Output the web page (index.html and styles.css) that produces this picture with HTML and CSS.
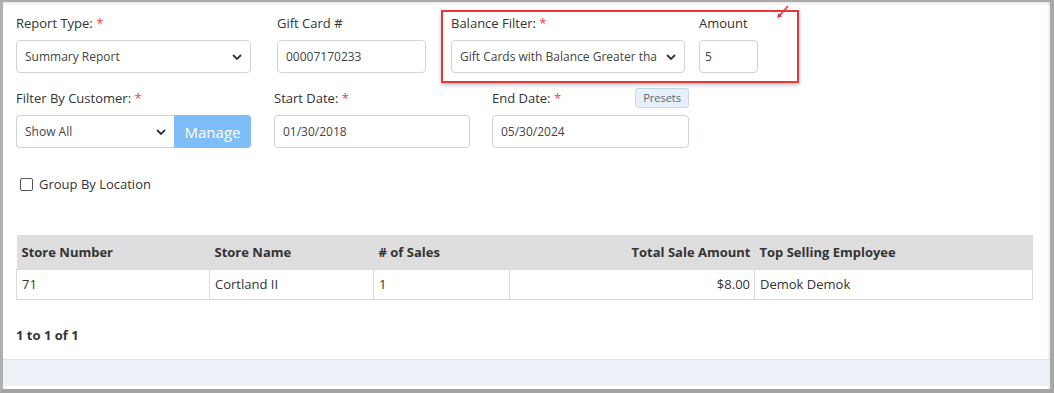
FILE: index.html
```html
<!DOCTYPE html>
<html>
<head>
<meta charset="utf-8">
<link rel="stylesheet" href="styles.css">
</head>
<body>
<div class="frame">
  <div class="content">
    <div class="row row1">
      <div class="field w-report">
        <div class="label">Report Type: <span class="req">*</span></div>
        <div class="select">
          <span>Summary Report</span>
          <svg class="chev" width="10" height="6" viewBox="0 0 10 6"><path d="M1 1l4 4 4-4" fill="none" stroke="#333" stroke-width="1.8"/></svg>
        </div>
      </div>
      <div class="field w-gift">
        <div class="label">Gift Card #</div>
        <div class="input">00007170233</div>
      </div>
      <div class="highlight">
        <div class="field w-balance">
          <div class="label">Balance Filter: <span class="req">*</span></div>
          <div class="select">
            <span class="clip">Gift Cards with Balance Greater tha</span>
            <svg class="chev" width="10" height="6" viewBox="0 0 10 6"><path d="M1 1l4 4 4-4" fill="none" stroke="#333" stroke-width="1.8"/></svg>
          </div>
        </div>
        <div class="field w-amount">
          <div class="label">Amount</div>
          <div class="input amount">5</div>
        </div>
        <svg class="arrow" width="14" height="14" viewBox="0 0 14 14"><path d="M12 1L3 11" stroke="#e8363c" stroke-width="1.6" fill="none"/><path d="M1 13l1.5-5 3.5 3.5z" fill="#e8363c"/></svg>
      </div>
    </div>

    <div class="row row2">
      <div class="field w-report">
        <div class="label">Filter By Customer: <span class="req">*</span></div>
        <div class="group">
          <div class="select grow">
            <span>Show All</span>
            <svg class="chev" width="10" height="6" viewBox="0 0 10 6"><path d="M1 1l4 4 4-4" fill="none" stroke="#333" stroke-width="1.8"/></svg>
          </div>
          <div class="btn-manage">Manage</div>
        </div>
      </div>
      <div class="field w-date">
        <div class="label">Start Date: <span class="req">*</span></div>
        <div class="input">01/30/2018</div>
      </div>
      <div class="field w-date2">
        <div class="label split">
          <span>End Date: <span class="req">*</span></span>
          <span class="presets">Presets</span>
        </div>
        <div class="input">05/30/2024</div>
      </div>
    </div>

    <div class="check-row">
      <span class="checkbox"></span>
      <span>Group By Location</span>
    </div>

    <table class="grid">
      <thead>
        <tr>
          <th class="c1">Store Number</th>
          <th class="c2">Store Name</th>
          <th class="c3"># of Sales</th>
          <th class="c4 num">Total Sale Amount</th>
          <th class="c5">Top Selling Employee</th>
        </tr>
      </thead>
      <tbody>
        <tr>
          <td>71</td>
          <td>Cortland II</td>
          <td>1</td>
          <td class="num">$8.00</td>
          <td>Demok Demok</td>
        </tr>
      </tbody>
    </table>

    <div class="pager">1 to 1 of 1</div>
  </div>
  <div class="footer-band"></div>
</div>
</body>
</html>
```

FILE: styles.css
```css
* { box-sizing: border-box; }
html, body {
  margin: 0;
  padding: 0;
  background: #fff;
}
body {
  font-family: "Open Sans", "Noto Sans", sans-serif;
  font-size: 13px;
  color: #333;
}
.frame {
  width: 1054px;
  height: 393px;
  border-top: 2px solid #a9a9a9;
  border-left: 3px solid #b0b0b0;
  border-right: 4px solid #a9a9a9;
  border-bottom: 4px solid #a4a4a4;
  box-shadow: inset 0 3px 3px -1px rgba(0,0,0,0.08), inset -2px 0 2px rgba(0,0,0,0.06);
  display: flex;
  flex-direction: column;
  background: #fff;
}
.content {
  flex: 1;
  padding: 8px 0 0 13px;
}
.row {
  display: flex;
  align-items: flex-start;
}
.field {
  display: flex;
  flex-direction: column;
}
.label {
  height: 20px;
  line-height: 20px;
  margin-bottom: 7px;
  font-size: 13px;
  color: #333;
  white-space: nowrap;
}
.label.split {
  display: flex;
  justify-content: space-between;
  align-items: center;
}
.req { color: #e8404a; }
.row1 { height: 73px; }
.row1 > .field { margin-top: 3px; }
.w-report { width: 235px; }
.w-gift { width: 149px; margin-left: 26px; }
.w-balance { width: 234px; }
.w-amount { width: 59px; margin-left: 14px; }
.highlight {
  position: relative;
  margin-left: 15px;
  width: 358px;
  height: 73px;
  border: 2px solid #e8363c;
  box-shadow: 0 2px 4px rgba(0,0,0,0.25);
  padding: 1px 0 0 8px;
  display: flex;
  align-items: flex-start;
}
.arrow {
  position: absolute;
  left: 333px;
  top: -7px;
}
.select, .input {
  height: 33px;
  border: 1px solid #ced4da;
  border-radius: 4px;
  background: #fff;
  font-size: 12px;
  color: #444;
  display: flex;
  align-items: center;
  padding: 0 8px;
  white-space: nowrap;
}
.select { justify-content: space-between; }
.clip { overflow: hidden; }
.chev { flex: none; margin-left: 6px; }
.amount { padding-left: 5px; }

.row2 { margin-top: 5px; }
.group { display: flex; height: 33px; }
.select.grow {
  flex: 1;
  border-radius: 4px 0 0 4px;
  border-right: none;
}
.btn-manage {
  width: 77px;
  height: 33px;
  background: #7dbdf8;
  color: #fff;
  font-size: 15px;
  display: flex;
  align-items: center;
  justify-content: center;
  border-radius: 0 4px 4px 0;
}
.w-date { width: 196px; margin-left: 23px; }
.w-date2 { width: 197px; margin-left: 22px; }
.presets {
  font-size: 11px;
  color: #5a6570;
  background: #e6f0fa;
  border: 1px solid #c9d9e8;
  border-radius: 3px;
  height: 20px;
  line-height: 18px;
  padding: 0 7px;
}

.check-row {
  display: flex;
  align-items: center;
  margin-top: 29px;
  margin-left: 4px;
  height: 14px;
  font-size: 13px;
  color: #333;
}
.checkbox {
  width: 13px;
  height: 13px;
  border: 1px solid #555;
  border-radius: 2px;
  margin-right: 6px;
  background: #fff;
}

.grid {
  margin-top: 44px;
  width: 1017px;
  border-collapse: collapse;
  font-size: 13px;
  color: #333;
}
.grid th {
  background: #dedede;
  height: 34px;
  text-align: left;
  font-weight: 700;
  padding: 0 5px;
  border: none;
}
.grid td {
  height: 30px;
  padding: 0 5px;
  border: 1px solid #dcdcdc;
}
.grid .num { text-align: right; padding-right: 4px; }
.c1 { width: 193px; }
.c2 { width: 164px; }
.c3 { width: 136px; }
.c4 { width: 245px; }

.pager {
  margin-top: 26px;
  font-weight: 700;
  font-size: 13px;
  color: #333;
}

.footer-band {
  height: 27px;
  margin-bottom: 3px;
  background: #edf0f7;
  border-top: 1px solid #dfe2e9;
}
```
